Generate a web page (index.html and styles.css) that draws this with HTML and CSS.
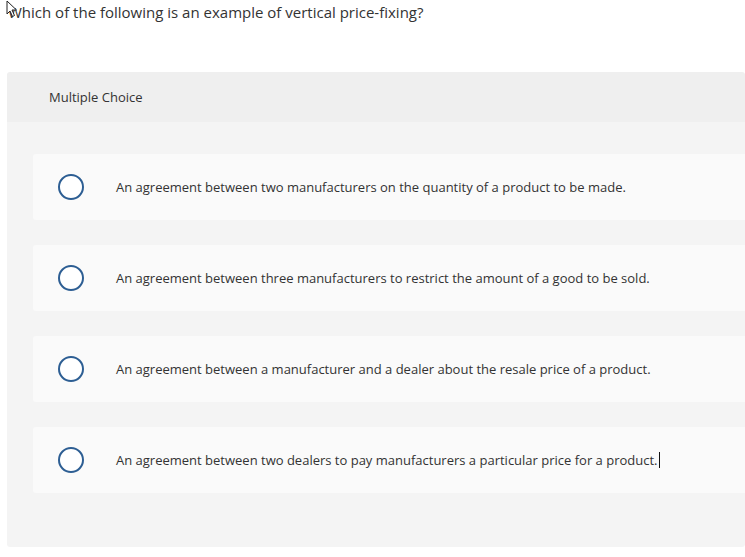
FILE: index.html
```html
<!DOCTYPE html>
<html>
<head>
<meta charset="utf-8">
<link rel="stylesheet" href="styles.css">
</head>
<body>
<div class="page">
  <p class="question">Which of the following is an example of vertical price-fixing?</p>
  <svg class="pointer" width="12" height="18" viewBox="0 0 12 18"><path d="M1 1 L1 14 L4 11 L6.5 16.5 L8.5 15.5 L6 10 L10.5 10 Z" fill="#fff" stroke="#222" stroke-width="1"/></svg>
  <section class="mc">
    <header class="mc-head">Multiple Choice</header>
    <div class="mc-body">
      <div class="option"><span class="radio"></span><span class="label">An agreement between two manufacturers on the quantity of a product to be made.</span></div>
      <div class="option"><span class="radio"></span><span class="label">An agreement between three manufacturers to restrict the amount of a good to be sold.</span></div>
      <div class="option"><span class="radio"></span><span class="label">An agreement between a manufacturer and a dealer about the resale price of a product.</span></div>
      <div class="option"><span class="radio"></span><span class="label">An agreement between two dealers to pay manufacturers a particular price for a product.<span class="caret"></span></span></div>
    </div>
  </section>
</div>
</body>
</html>
```
FILE: styles.css
```css
html, body {
  margin: 0;
  padding: 0;
  background: #fff;
}
body {
  font-family: "Open Sans", Lato, sans-serif;
  color: #333;
  font-variant-ligatures: none;
}
.page {
  position: relative;
  width: 745px;
  height: 557px;
  overflow: hidden;
}
.question {
  margin: 0;
  padding: 3px 0 0 8px;
  font-size: 15px;
  line-height: 18px;
  height: 72px;
  box-sizing: border-box;
}
.pointer {
  position: absolute;
  left: 6px;
  top: 0;
}
.mc {
  margin-left: 7px;
  border-radius: 3px;
  overflow: hidden;
}
.mc-head {
  background: #efefef;
  height: 50px;
  display: flex;
  align-items: center;
  padding-left: 42px;
  font-size: 13px;
}
.mc-body {
  background: #f4f4f4;
  padding: 32px 0 54px 26px;
  display: flex;
  flex-direction: column;
  gap: 25px;
}
.option {
  background: #fafafa;
  height: 66px;
  border-radius: 3px 0 0 3px;
  display: flex;
  align-items: center;
  padding-left: 25px;
}
.radio {
  width: 22px;
  height: 22px;
  border: 2px solid #2d5e93;
  border-radius: 50%;
  background: #fff;
  flex: none;
}
.label {
  margin-left: 32px;
  font-size: 13px;
}
.caret {
  display: inline-block;
  width: 1px;
  height: 16px;
  background: #111;
  vertical-align: -3px;
  margin-left: 1px;
}
```
